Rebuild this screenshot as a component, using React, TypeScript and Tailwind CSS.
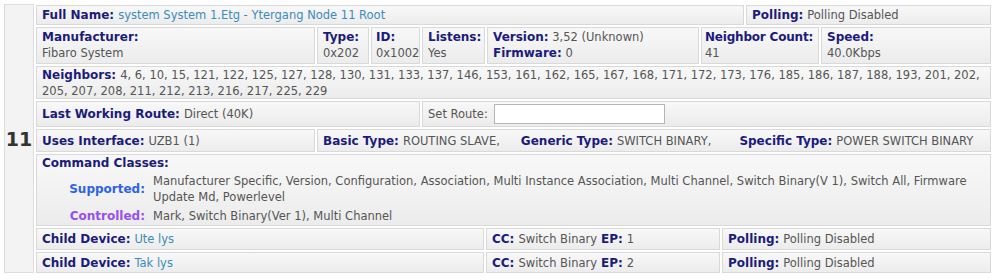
import React from "react";

const cell =
  "border border-[#d9d9d9] bg-[linear-gradient(to_bottom,#f8f8f8,#ececec)] px-[5px]";
const L = "font-bold text-[#1b1b7c] text-[12px]";
const V = "text-[#555555]";
const A = "text-[#3b8cbc]";

export default function App() {
  const n1 =
    "4, 6, 10, 15, 121, 122, 125, 127, 128, 130, 131, 133, 137, 146, 153, 161, 162, 165, 167, 168, 171, 172, 173, 176, 185, 186, 187, 188, 193, 201, 202,";
  const n2 = "205, 207, 208, 211, 212, 213, 216, 217, 225, 229";
  return (
    <div
      className="w-[1000px] h-[280px] bg-white pt-[4px] pl-[4px]"
      style={{ fontFamily: '"DejaVu Sans", Verdana, sans-serif' }}
    >
      <div className="flex w-[987px] gap-[2px] text-[11.5px] leading-[16px]">
        <div className="w-[30px] border border-[#dddddd] bg-[#f3f3f3] flex items-center justify-center text-[19px] font-bold text-[#333333]">
          11
        </div>
        <div className="flex-1 flex flex-col gap-[2px] pt-[1px]">
          {/* Row 1 */}
          <div className="flex gap-[2px] h-[20px]">
            <div className={`${cell} w-[708px] flex items-center`}>
              <span className={L}>Full Name:</span>
              <span className={`${A} ml-[4px]`}>system System 1.Etg - Ytergang Node 11 Root</span>
            </div>
            <div className={`${cell} flex-1 flex items-center`}>
              <span className={L}>Polling:</span>
              <span className={`${V} ml-[4px]`}>Polling Disabled</span>
            </div>
          </div>
          {/* Row 2 */}
          <div className="flex gap-[2px] h-[37px] whitespace-nowrap">
            <div className={`${cell} w-[279px] pt-[1px]`}>
              <div className={L}>Manufacturer:</div>
              <div className={V}>Fibaro System</div>
            </div>
            <div className={`${cell} w-[52px] pt-[1px]`}>
              <div className={L}>Type:</div>
              <div className={V}>0x202</div>
            </div>
            <div className={`${cell} w-[49px] pt-[1px] !px-[4px]`}>
              <div className={L}>ID:</div>
              <div className={V}>0x1002</div>
            </div>
            <div className={`${cell} w-[63px] pt-[1px]`}>
              <div className={L}>Listens:</div>
              <div className={V}>Yes</div>
            </div>
            <div className={`${cell} w-[212px] pt-[1px]`}>
              <div>
                <span className={L}>Version:</span> <span className={V}>3,52 (Unknown)</span>
              </div>
              <div>
                <span className={L}>Firmware:</span> <span className={V}>0</span>
              </div>
            </div>
            <div className={`${cell} w-[118px] pt-[1px] !px-[3px]`}>
              <div className={`${L} tracking-[-0.2px]`}>Neighbor Count:</div>
              <div className={V}>41</div>
            </div>
            <div className={`${cell} flex-1 pt-[1px]`}>
              <div className={L}>Speed:</div>
              <div className={V}>40.0Kbps</div>
            </div>
          </div>
          {/* Row 3 */}
          <div className={`${cell} h-[33px] whitespace-nowrap`}>
            <div>
              <span className={L}>Neighbors:</span>
              <span className={`${V} ml-[4px]`}>{n1}</span>
            </div>
            <div className={V}>{n2}</div>
          </div>
          {/* Row 4 */}
          <div className="flex gap-[2px] h-[26px]">
            <div className={`${cell} w-[384px] flex items-center`}>
              <span className={L}>Last Working Route:</span>
              <span className={`${V} ml-[4px]`}>Direct (40K)</span>
            </div>
            <div className={`${cell} flex-1 flex items-center`}>
              <span className={V}>Set Route:</span>
              <div className="ml-[6px] w-[171px] h-[20px] border border-[#b5b5b5] bg-white" />
            </div>
          </div>
          {/* Row 5 */}
          <div className="flex gap-[2px] h-[23px] whitespace-nowrap">
            <div className={`${cell} w-[279px] flex items-center`}>
              <span className={L}>Uses Interface:</span>
              <span className={`${V} ml-[4px]`}>UZB1 (1)</span>
            </div>
            <div className={`${cell} flex-1 flex items-center`}>
              <span className={L}>Basic Type:</span>
              <span className={`${V} ml-[4px]`}>ROUTING SLAVE,</span>
              <span className={`${L} ml-[21px]`}>Generic Type:</span>
              <span className={`${V} ml-[4px]`}>SWITCH BINARY,</span>
              <span className={`${L} ml-[28px]`}>Specific Type:</span>
              <span className={`${V} ml-[4px]`}>POWER SWITCH BINARY</span>
            </div>
          </div>
          {/* Row 6 */}
          <div className={`${cell} h-[72px]`}>
            <div className={L}>Command Classes:</div>
            <div className="flex mt-[2px] items-center">
              <div className="w-[103px] shrink-0 text-right font-bold text-[#2e63e8] text-[12px]">
                Supported:
              </div>
              <div className={`${V} ml-[8px] flex-1`}>
                Manufacturer Specific, Version, Configuration, Association, Multi Instance Association, Multi
                Channel, Switch Binary(V 1), Switch All, Firmware Update Md, Powerlevel
              </div>
            </div>
            <div className="flex mt-[3px] items-center">
              <div className="w-[103px] shrink-0 text-right font-bold text-[#9650ee] text-[12px]">
                Controlled:
              </div>
              <div className={`${V} ml-[8px] flex-1`}>Mark, Switch Binary(Ver 1), Multi Channel</div>
            </div>
          </div>
          {/* Row 7 */}
          <div className="flex gap-[2px] h-[22px] whitespace-nowrap">
            <div className={`${cell} w-[448px] flex items-center`}>
              <span className={L}>Child Device:</span>
              <span className={`${A} ml-[4px]`}>Ute lys</span>
            </div>
            <div className={`${cell} w-[234px] flex items-center`}>
              <span className={L}>CC:</span>
              <span className={`${V} ml-[4px]`}>Switch Binary</span>
              <span className={`${L} ml-[4px]`}>EP:</span>
              <span className={`${V} ml-[4px]`}>1</span>
            </div>
            <div className={`${cell} flex-1 flex items-center`}>
              <span className={L}>Polling:</span>
              <span className={`${V} ml-[4px]`}>Polling Disabled</span>
            </div>
          </div>
          {/* Row 8 */}
          <div className="flex gap-[2px] h-[21px] whitespace-nowrap">
            <div className={`${cell} w-[448px] flex items-center`}>
              <span className={L}>Child Device:</span>
              <span className={`${A} ml-[4px]`}>Tak lys</span>
            </div>
            <div className={`${cell} w-[234px] flex items-center`}>
              <span className={L}>CC:</span>
              <span className={`${V} ml-[4px]`}>Switch Binary</span>
              <span className={`${L} ml-[4px]`}>EP:</span>
              <span className={`${V} ml-[4px]`}>2</span>
            </div>
            <div className={`${cell} flex-1 flex items-center`}>
              <span className={L}>Polling:</span>
              <span className={`${V} ml-[4px]`}>Polling Disabled</span>
            </div>
          </div>
        </div>
      </div>
    </div>
  );
}
